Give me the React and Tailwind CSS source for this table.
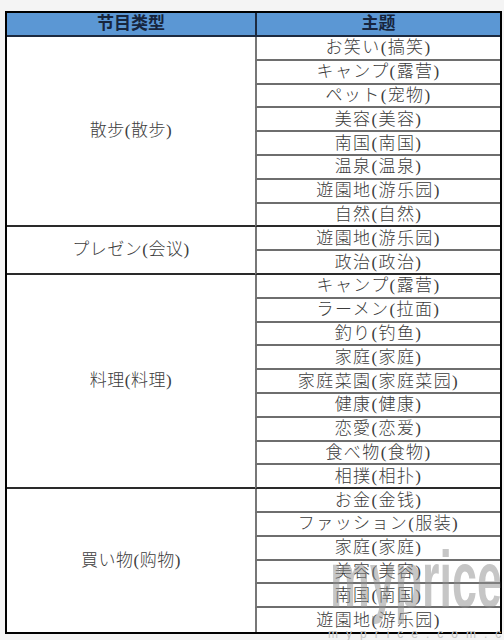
const groups = [
  {
    name: "散步(散步)",
    span: "row-span-8",
    topics: ["お笑い(搞笑)", "キャンプ(露营)", "ペット(宠物)", "美容(美容)", "南国(南国)", "温泉(温泉)", "遊園地(游乐园)", "自然(自然)"],
  },
  {
    name: "プレゼン(会议)",
    span: "row-span-2",
    topics: ["遊園地(游乐园)", "政治(政治)"],
  },
  {
    name: "料理(料理)",
    span: "row-span-9",
    topics: ["キャンプ(露营)", "ラーメン(拉面)", "釣り(钓鱼)", "家庭(家庭)", "家庭菜園(家庭菜园)", "健康(健康)", "恋愛(恋爱)", "食べ物(食物)", "相撲(相扑)"],
  },
  {
    name: "買い物(购物)",
    span: "row-span-6",
    topics: ["お金(金钱)", "ファッション(服装)", "家庭(家庭)", "美容(美容)", "南国(南国)", "遊園地(游乐园)"],
  },
];

const App = () => {
  return (
    <div className="relative w-[504px] h-[640px] overflow-hidden bg-[#f4f4f4] pt-[11px] pl-[5px] font-['Liberation_Serif','Noto_Sans_CJK_JP',serif]">
      <div className="grid w-[497px] grid-cols-[248px_1fr] grid-rows-[24px_repeat(25,23.8px)] border-2 border-black bg-white text-[17px] font-light tracking-[1.4px] text-[#3c3c3c]">
        <div className="flex items-center justify-center bg-[#5b97d4] border-b-2 border-[#1c2a40] text-[17px] font-bold tracking-normal text-[#17253d]">节目类型</div>
        <div className="flex items-center justify-center bg-[#5b97d4] border-b-2 border-l-2 border-[#1c2a40] text-[17px] font-bold tracking-normal text-[#17253d]">主题</div>

        {groups.map((g, gi) => (
          <>
            <div
              key={"g" + gi}
              className={`${g.span} flex items-center justify-center tracking-[0.5px] ${gi < groups.length - 1 ? "border-b-2 border-[#2a2a2a]" : ""}`}
            >
              {g.name}
            </div>
            {g.topics.map((t, i) => {
              const last = i === g.topics.length - 1;
              const end = last && gi === groups.length - 1;
              return (
                <div
                  key={gi + "-" + i}
                  className={`flex items-center justify-center leading-none border-l-2 border-l-[#777] ${end ? "" : last ? "border-b-2 border-b-[#2a2a2a]" : "border-b-2 border-b-[#6e6e6e]"}`}
                >
                  {t}
                </div>
              );
            })}
          </>
        ))}
      </div>

      {/* watermark */}
      <div className="pointer-events-none absolute left-[330px] top-[540px] origin-left scale-x-[0.56] whitespace-nowrap font-['Liberation_Sans',sans-serif] text-[80px] font-bold leading-none text-[#8e8e8e]/50">
        myprice
      </div>
      <div className="pointer-events-none absolute left-[328px] top-[628px] whitespace-nowrap font-['Liberation_Sans',sans-serif] text-[12px] leading-none tracking-[8px] text-[#c4c4c4]">
        myprice.com.cn
      </div>
    </div>
  );
};

export default App;
